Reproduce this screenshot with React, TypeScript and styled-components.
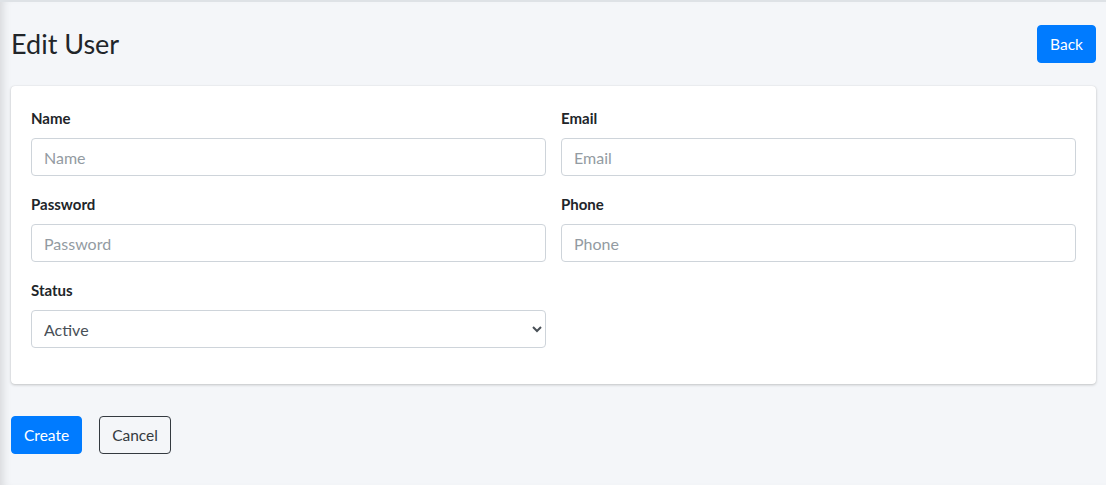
import React from 'react';
import styled, { createGlobalStyle } from 'styled-components';

const GlobalStyle = createGlobalStyle`
  * { box-sizing: border-box; }
  html, body { margin: 0; padding: 0; }
  body {
    font-family: Lato, "Source Sans Pro", "Liberation Sans", sans-serif;
    font-size: 16px;
    line-height: 1.5;
    color: #212529;
    background: #f4f6f9;
  }
`;

const Page = styled.div`
  min-height: 485px;
  background: #f4f6f9;
  border-top: 2px solid #dee2e6;
  box-shadow: inset 9px 0 8px -6px rgba(0, 0, 0, 0.12);
  padding: 23px 10px 0 11px;
`;

const Header = styled.div`
  display: flex;
  align-items: center;
  justify-content: space-between;
  margin-bottom: 23px;
`;

const Title = styled.h1`
  margin: 0;
  font-size: 27px;
  font-weight: 400;
  line-height: 1.2;
  color: #212529;
`;

const Button = styled.button<{ variant?: 'primary' | 'outline' }>`
  font-family: inherit;
  font-size: 15.5px;
  line-height: 24px;
  padding: 6px 12px;
  border-radius: 4px;
  cursor: pointer;
  border: 1px solid ${({ variant }) => (variant === 'outline' ? '#343a40' : '#007bff')};
  background: ${({ variant }) => (variant === 'outline' ? 'transparent' : '#007bff')};
  color: ${({ variant }) => (variant === 'outline' ? '#343a40' : '#fff')};
`;

const Card = styled.div`
  background: #fff;
  border-radius: 4px;
  box-shadow: 0 0 1px rgba(0, 0, 0, 0.125), 0 1px 3px rgba(0, 0, 0, 0.2);
  padding: 20px 20px 20px;
  margin-bottom: 32px;
`;

const Grid = styled.div`
  display: grid;
  grid-template-columns: 1fr 1fr;
  column-gap: 15px;
`;

const Field = styled.div`
  margin-bottom: 16px;
`;

const Label = styled.label`
  display: block;
  font-weight: 700;
  font-size: 15px;
  line-height: 24px;
  margin-bottom: 8px;
`;

const Input = styled.input`
  display: block;
  width: 100%;
  height: 38px;
  padding: 6px 12px;
  font-family: inherit;
  font-size: 16px;
  color: #495057;
  background: #fff;
  border: 1px solid #ced4da;
  border-radius: 4px;
  outline: none;

  &::placeholder {
    color: #939ba2;
  }
`;

const Select = styled.select`
  display: block;
  width: 100%;
  height: 38px;
  padding: 6px 8px;
  font-family: inherit;
  font-size: 16px;
  color: #495057;
  background: #fff;
  border: 1px solid #ced4da;
  border-radius: 4px;
  outline: none;
`;

const Actions = styled.div`
  display: flex;
  gap: 17px;
`;

export default function App() {
  return (
    <>
      <GlobalStyle />
      <Page>
        <Header>
          <Title>Edit User</Title>
          <Button>Back</Button>
        </Header>
        <Card>
          <Grid>
            <Field>
              <Label>Name</Label>
              <Input placeholder="Name" />
            </Field>
            <Field>
              <Label>Email</Label>
              <Input placeholder="Email" />
            </Field>
            <Field>
              <Label>Password</Label>
              <Input type="password" placeholder="Password" />
            </Field>
            <Field>
              <Label>Phone</Label>
              <Input placeholder="Phone" />
            </Field>
            <Field>
              <Label>Status</Label>
              <Select defaultValue="active">
                <option value="active">Active</option>
                <option value="inactive">Inactive</option>
              </Select>
            </Field>
          </Grid>
        </Card>
        <Actions>
          <Button>Create</Button>
          <Button variant="outline">Cancel</Button>
        </Actions>
      </Page>
    </>
  );
}
